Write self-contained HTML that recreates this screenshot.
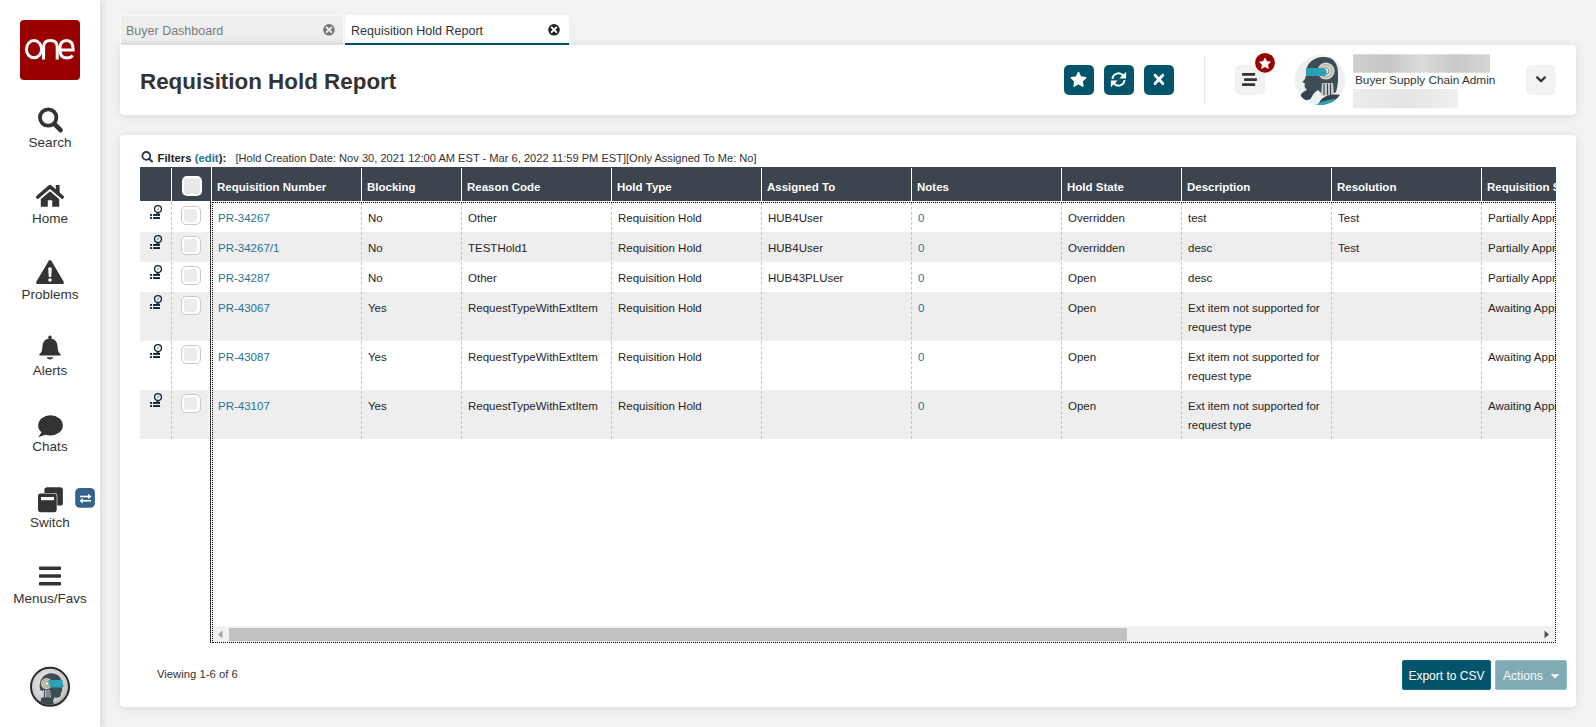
<!DOCTYPE html>
<html><head><meta charset="utf-8">
<style>
*{box-sizing:border-box;margin:0;padding:0}
html,body{width:1596px;height:727px;overflow:hidden;background:#f2f2f2;font-family:"Liberation Sans",sans-serif;color:#333}
.abs{position:absolute}
#side{position:absolute;left:0;top:0;width:100px;height:727px;background:#fff;box-shadow:2px 0 6px rgba(0,0,0,0.10)}
.nav{position:absolute;left:0;width:100px;text-align:center;font-size:13.5px;color:#333;line-height:16px}
.tab{position:absolute;top:15px;height:30px;border-radius:5px 5px 0 0;font-size:12.5px;line-height:32px;padding-left:6px}
.card{position:absolute;left:120px;width:1456px;background:#fff;border-radius:4px;box-shadow:0 1px 8px rgba(0,0,0,0.10)}
.hbtn{position:absolute;top:65px;width:30px;height:30px;border-radius:5px;background:#02546b}
.th{position:absolute;top:167px;height:34px;color:#fff;font-weight:bold;font-size:11.5px;line-height:34px;white-space:nowrap}
.td{position:absolute;font-size:11.5px;line-height:19px;color:#252525}
.lnk{color:#1f7596}
</style></head>
<body>
<div id="side">
<svg width="100" height="727" viewBox="0 0 100 727" style="position:absolute;left:0;top:0">
 <rect x="20" y="20" width="60" height="60" rx="4" fill="#990000"/>
 <g fill="none" stroke="#fff" stroke-width="3">
  <ellipse cx="34" cy="49.2" rx="7.6" ry="8.6"/>
  <path d="M43.6 59.5 V47 Q43.6 40.6 50.4 40.6 Q57.2 40.6 57.2 47 V59.5"/>
  <path d="M59.8 50 H73.2 Q73.2 40.6 66.6 40.6 Q59.8 40.6 59.8 49.3 Q59.8 57.9 66.8 57.9 Q70.6 57.9 72.8 55.6"/>
 </g>
 <g fill="#333" stroke="none">
  <circle cx="48.2" cy="117.5" r="8.2" fill="none" stroke="#333" stroke-width="3.8"/>
  <line x1="54.4" y1="123.8" x2="60.6" y2="130.2" stroke="#333" stroke-width="4.6" stroke-linecap="round"/>
  <!-- home -->
  <path d="M40.8 199 L50 191.3 L59.2 199 V206.8 H52.2 V200.2 H47.8 V206.8 H40.8 Z"/>
  <polyline points="37.8,197 50,186.6 62.2,197" fill="none" stroke="#fff" stroke-width="6.5" stroke-linecap="round" stroke-linejoin="round"/>
  <polyline points="37.8,197 50,186.6 62.2,197" fill="none" stroke="#333" stroke-width="3.6" stroke-linecap="round" stroke-linejoin="round"/>
  <rect x="55.8" y="185" width="3.8" height="7.5"/>
  <!-- problems -->
  <path d="M50 261.5 L37.6 282.5 H62.4 Z" stroke="#333" stroke-width="3" stroke-linejoin="round"/>
  <path d="M48.2 268.5 Q48.2 267.6 49.1 267.6 H50.9 Q51.8 267.6 51.8 268.5 L51.2 277 H48.8 Z" fill="#fff"/>
  <circle cx="50" cy="280" r="1.8" fill="#fff"/>
  <!-- bell -->
  <circle cx="50" cy="337.4" r="1.8"/>
  <path d="M50 338.4 C44.5 338.4 42.6 342.5 42.4 347 C42.2 351 41.5 352.5 39.2 354.6 Q39 355.6 40.2 355.6 H59.8 Q61 355.6 60.8 354.6 C58.5 352.5 57.8 351 57.6 347 C57.4 342.5 55.5 338.4 50 338.4 Z"/>
  <path d="M46.3 357.2 H53.7 Q50 362 46.3 357.2 Z"/>
  <!-- chat -->
  <ellipse cx="50.5" cy="425.4" rx="12.3" ry="10.1"/>
  <path d="M42.5 431 L38.2 437.2 L47.5 434 Z"/>
  <!-- switch -->
  <rect x="44.4" y="487.3" width="18.5" height="18.3" rx="2.6"/>
  <rect x="37.4" y="493" width="19.9" height="19.8" rx="3" fill="#fff"/>
  <rect x="38" y="493.6" width="18.7" height="18.6" rx="2.6"/>
  <rect x="41" y="497" width="13" height="3.2" fill="#fff"/>
  <rect x="75.2" y="488" width="19.7" height="19.8" rx="4.6" fill="#35628a"/>
  <g stroke="#fff" stroke-width="1.6" fill="#fff">
   <line x1="80" y1="496.5" x2="89" y2="496.5"/>
   <line x1="82" y1="500.8" x2="91" y2="500.8"/>
  </g>
  <path d="M88.2 493.8 L91.4 496.5 L88.2 499.2 Z" fill="#fff"/>
  <path d="M82.8 498.1 L79.6 500.8 L82.8 503.5 Z" fill="#fff"/>
  <!-- menu -->
  <rect x="39" y="566.4" width="22" height="3.6" rx="0.8"/>
  <rect x="39" y="574.2" width="22" height="3.6" rx="0.8"/>
  <rect x="39" y="582" width="22" height="3.6" rx="0.8"/>
 </g>
 <!-- avatar -->
 <defs>
  <radialGradient id="avg" cx="0.45" cy="0.4" r="0.7">
   <stop offset="0" stop-color="#f4f4f4"/><stop offset="0.7" stop-color="#c9c9c9"/><stop offset="1" stop-color="#8a8a8a"/>
  </radialGradient>
 </defs>
 <circle cx="50" cy="686.8" r="19" fill="url(#avg)" stroke="#2b2b2b" stroke-width="2"/>
 <clipPath id="avc2"><circle cx="50" cy="686.8" r="18"/></clipPath>
 <g clip-path="url(#avc2)">
 <path d="M40.2 690 C38.6 683 41 675.2 49 673.4 C56 672.2 61 676 62 682 L63.6 686.6 L62 687.6 C62.5 690 62.2 692.4 60.6 693.4 L60.8 695.6 C60 697.6 57 698 54.6 697.6 L52.5 701 L47 693 Z" fill="#3d4c55"/>
 <circle cx="46.6" cy="683.6" r="5.6" fill="#d6d6d6"/>
 <circle cx="46.6" cy="683.6" r="4" fill="none" stroke="#a8925e" stroke-width="0.9"/>
 <circle cx="47" cy="683.6" r="2.1" fill="#ececec" stroke="#707070" stroke-width="0.7"/>
 <path d="M48.6 680 H62.6 V687.4 H50.4 Q48.6 684 48.6 680 Z" fill="#2aa3b7"/>
 <path d="M43 690 H50 L51 698 H43 Z" fill="#bdbdbd"/>
 <path d="M44.5 690 V698 M47 690 V698 M49 690.5 V698" stroke="#3d4c55" stroke-width="0.9"/>
 <path d="M39.5 706 L41.5 697.5 L52 697.5 L54.5 706 Z" fill="#3a4850"/>
 </g>
</svg>
<div class="nav" style="top:134.5px">Search</div>
<div class="nav" style="top:210.5px">Home</div>
<div class="nav" style="top:286.5px">Problems</div>
<div class="nav" style="top:362.5px">Alerts</div>
<div class="nav" style="top:438.5px">Chats</div>
<div class="nav" style="top:514.5px">Switch</div>
<div class="nav" style="top:590.5px">Menus/Favs</div>
</div>

<!-- tabs -->
<div class="tab" style="left:120px;width:224px;background:#eeeeee;color:#7a7a7a;border:1px solid #fafafa;border-bottom:0;padding-left:5px;line-height:31px;box-shadow:inset 0 -6px 8px -6px rgba(0,0,0,0.10)">Buyer Dashboard</div>
<div class="tab" style="left:345px;width:224px;background:#fff;color:#333;border-bottom:2px solid #02546b">Requisition Hold Report</div>

<svg class="abs" style="left:0;top:0" width="600" height="45" viewBox="0 0 600 45">
 <circle cx="329" cy="29.8" r="5.8" fill="#777"/>
 <g stroke="#eee" stroke-width="1.9" stroke-linecap="round"><line x1="326.6" y1="27.4" x2="331.4" y2="32.2"/><line x1="331.4" y1="27.4" x2="326.6" y2="32.2"/></g>
 <circle cx="554" cy="29.8" r="5.8" fill="#222"/>
 <g stroke="#fff" stroke-width="1.9" stroke-linecap="round"><line x1="551.6" y1="27.4" x2="556.4" y2="32.2"/><line x1="556.4" y1="27.4" x2="551.6" y2="32.2"/></g>
</svg>
<!-- header card -->
<div class="card" style="top:45px;height:70px;border-radius:0 4px 4px 4px"></div>

<!-- header content -->
<div class="abs" style="left:140px;top:69px;font-size:22.4px;line-height:26px;font-weight:bold;color:#333">Requisition Hold Report</div>
<div class="hbtn" style="left:1064px"></div>
<div class="hbtn" style="left:1104px"></div>
<div class="hbtn" style="left:1144px"></div>
<svg class="abs" style="left:0;top:0" width="1596" height="120" viewBox="0 0 1596 120">
 <polygon points="1078.50,72.40 1080.67,77.01 1085.73,77.65 1082.02,81.14 1082.97,86.15 1078.50,83.70 1074.03,86.15 1074.98,81.14 1071.27,77.65 1076.33,77.01" fill="#fff" stroke="#fff" stroke-width="1.4" stroke-linejoin="round"/>
 <g fill="none" stroke="#fff" stroke-width="2">
  <path d="M1112.5 79 A6 6 0 0 1 1123.3 75.8"/>
  <path d="M1124.5 80 A6 6 0 0 1 1113.7 83.2"/>
 </g>
 <polygon points="1119.3,78.6 1126.1,78.6 1126.1,71.8" fill="#fff"/>
 <polygon points="1117.7,80.4 1110.9,80.4 1110.9,87.2" fill="#fff"/>
 <g stroke="#fff" stroke-width="2.9" stroke-linecap="round">
  <line x1="1155.1" y1="75.3" x2="1162.8" y2="83.6"/>
  <line x1="1162.8" y1="75.3" x2="1155.1" y2="83.6"/>
 </g>
 <rect x="1204" y="55" width="1" height="50" fill="#e8e8e8"/>
 <rect x="1235" y="65" width="30" height="30" rx="5" fill="#f2f2f2"/>
 <rect x="1242" y="72.9" width="13.2" height="2.9" rx="0.8" fill="#333"/>
 <rect x="1244" y="78.2" width="13" height="2.9" rx="0.8" fill="#333"/>
 <rect x="1242" y="83.2" width="13.2" height="2.9" rx="0.8" fill="#333"/>
 <circle cx="1265" cy="62.8" r="9.9" fill="#990000"/>
 <polygon points="1265.00,58.10 1266.65,61.53 1270.42,62.04 1267.66,64.67 1268.35,68.41 1265.00,66.60 1261.65,68.41 1262.34,64.67 1259.58,62.04 1263.35,61.53" fill="#fff" stroke="#fff" stroke-width="0.8" stroke-linejoin="round"/>
 <rect x="1526" y="65" width="30" height="30" rx="5" fill="#f2f2f2"/>
 <polyline points="1537.2,77.4 1541,81.2 1544.8,77.4" fill="none" stroke="#333" stroke-width="2.3" stroke-linecap="round" stroke-linejoin="round"/>
 <defs>
  <linearGradient id="blur1" x1="0" x2="1" y1="0" y2="0">
   <stop offset="0" stop-color="#cfcfcf"/><stop offset="0.25" stop-color="#c6c6c6"/><stop offset="0.5" stop-color="#dadada"/><stop offset="0.75" stop-color="#c8c8c8"/><stop offset="1" stop-color="#d6d6d6"/>
  </linearGradient>
  <linearGradient id="blur2" x1="0" x2="1" y1="0" y2="0">
   <stop offset="0" stop-color="#ececec"/><stop offset="0.5" stop-color="#e4e4e4"/><stop offset="1" stop-color="#f0f0f0"/>
  </linearGradient>
 </defs>
 <rect x="1353" y="54.3" width="137" height="18.4" fill="url(#blur1)"/>
 <rect x="1353" y="89" width="105" height="19.3" fill="url(#blur2)"/>
 <!-- avatar -->
 <circle cx="1320" cy="80" r="25" fill="#efefef"/>
 <clipPath id="avclip"><circle cx="1320" cy="80" r="25"/></clipPath>
 <g clip-path="url(#avclip)">
  <path d="M1336 92 C1338 86 1338.5 78 1337.8 70 C1337 61 1331 56.5 1323 57 C1314 57.5 1308.5 62 1306.5 68.5 L1306 75 L1305 79 L1302.5 82 L1305 83.5 C1304 86 1304.5 88 1306.5 89 C1305.5 91.5 1306 93 1308.5 93.5 L1314 93 L1318 90 L1322 94 L1330 95 Z" fill="#3d4c55"/>
  <path d="M1300.5 96 C1301.5 92 1305.5 90 1309.5 90.5 L1314.5 92 L1310.5 99 C1306.5 101 1301.5 100 1300.5 96 Z" fill="#34434b"/>
  <circle cx="1326" cy="71" r="8.6" fill="#d4d7d8"/>
  <circle cx="1326" cy="71" r="6.2" fill="none" stroke="#b09a66" stroke-width="1"/>
  <circle cx="1325.5" cy="71" r="3.4" fill="#eeeeee" stroke="#6b6b6b" stroke-width="0.8"/>
  <path d="M1306 68 H1324 Q1329 71.5 1325 76 H1306 Z" fill="#2aa0b4"/>
  <path d="M1322 83 H1333 L1334 96 H1321 Z" fill="#cfcfcf"/>
  <path d="M1324 83.5 V95 M1327.5 83.5 V95 M1330.5 83.5 V95" stroke="#36454d" stroke-width="1.2"/>
  <path d="M1318 106 C1320 98 1326 95 1334 94.5 L1346 95 L1346 106 Z" fill="#34434b"/>
  <path d="M1314 106 C1319 101.5 1330 99.5 1342 97.5 L1346 98.5 L1346 100.5 C1334 102.5 1325 104 1321 106 Z" fill="#2aa3bd"/>
 </g>
</svg>
<div class="abs" style="left:1355px;top:71.9px;font-size:11.8px;line-height:16px;color:#333;white-space:nowrap">Buyer Supply Chain Admin</div>

<!-- main card -->
<div class="card" style="top:135px;height:572px"></div>

<!-- main content -->
<svg class="abs" style="left:140px;top:150.4px" width="14" height="13" viewBox="0 0 14 13"><circle cx="6.3" cy="5.9" r="3.9" fill="none" stroke="#2a3b4c" stroke-width="1.9"/><line x1="9" y1="8.8" x2="12" y2="11.6" stroke="#2a3b4c" stroke-width="2.1" stroke-linecap="round"/></svg>
<div class="abs" style="left:157.5px;top:150px;font-size:11.35px;line-height:16px;white-space:nowrap;color:#222"><b>Filters <span style="color:#1f7596">(edit</span>):</b></div>
<div class="abs" style="left:235.5px;top:150px;font-size:11.1px;line-height:16px;white-space:nowrap;color:#333">[Hold Creation Date: Nov 30, 2021 12:00 AM EST - Mar 6, 2022 11:59 PM EST][Only Assigned To Me: No]</div>
<div class="abs" style="left:140px;top:167px;width:1416px;height:476px;overflow:hidden">
<div class="abs" style="left:0;top:0;width:1416px;height:34px;background:#3c444e"></div>
<div class="abs" style="left:0;top:65px;width:69px;height:30px;background:#eeeeee"></div>
<div class="abs" style="left:72px;top:65px;width:1344px;height:30px;background:#eeeeee"></div>
<div class="abs" style="left:0;top:125px;width:69px;height:49px;background:#eeeeee"></div>
<div class="abs" style="left:72px;top:125px;width:1344px;height:49px;background:#eeeeee"></div>
<div class="abs" style="left:0;top:223px;width:69px;height:49px;background:#eeeeee"></div>
<div class="abs" style="left:72px;top:223px;width:1344px;height:49px;background:#eeeeee"></div>
<div class="abs" style="left:31px;top:1px;width:1px;height:33px;background:#fff"></div>
<div class="abs" style="left:70.5px;top:0;width:1.5px;height:34px;background:#fff"></div>
<div class="abs" style="left:221px;top:1px;width:1px;height:33px;background:#fff"></div>
<div class="abs" style="left:321px;top:1px;width:1px;height:33px;background:#fff"></div>
<div class="abs" style="left:471px;top:1px;width:1px;height:33px;background:#fff"></div>
<div class="abs" style="left:621px;top:1px;width:1px;height:33px;background:#fff"></div>
<div class="abs" style="left:771px;top:1px;width:1px;height:33px;background:#fff"></div>
<div class="abs" style="left:921px;top:1px;width:1px;height:33px;background:#fff"></div>
<div class="abs" style="left:1041px;top:1px;width:1px;height:33px;background:#fff"></div>
<div class="abs" style="left:1191px;top:1px;width:1px;height:33px;background:#fff"></div>
<div class="abs" style="left:1341px;top:1px;width:1px;height:33px;background:#fff"></div>
<div class="abs" style="left:42.3px;top:8.9px;width:19.5px;height:19.8px;border:2.5px solid #fff;border-radius:5px;background:#e8e8e8"></div>
<div class="th" style="left:77px;top:3px">Requisition Number</div>
<div class="th" style="left:227px;top:3px">Blocking</div>
<div class="th" style="left:327px;top:3px">Reason Code</div>
<div class="th" style="left:477px;top:3px">Hold Type</div>
<div class="th" style="left:627px;top:3px">Assigned To</div>
<div class="th" style="left:777px;top:3px">Notes</div>
<div class="th" style="left:927px;top:3px">Hold State</div>
<div class="th" style="left:1047px;top:3px">Description</div>
<div class="th" style="left:1197px;top:3px">Resolution</div>
<div class="th" style="left:1347px;top:3px">Requisition Status</div>
<div class="abs" style="left:31px;top:35px;width:0;height:237px;border-left:1px dashed #c4c4c4"></div>
<div class="abs" style="left:221px;top:35px;width:0;height:237px;border-left:1px dashed #c4c4c4"></div>
<div class="abs" style="left:321px;top:35px;width:0;height:237px;border-left:1px dashed #c4c4c4"></div>
<div class="abs" style="left:471px;top:35px;width:0;height:237px;border-left:1px dashed #c4c4c4"></div>
<div class="abs" style="left:621px;top:35px;width:0;height:237px;border-left:1px dashed #c4c4c4"></div>
<div class="abs" style="left:771px;top:35px;width:0;height:237px;border-left:1px dashed #c4c4c4"></div>
<div class="abs" style="left:921px;top:35px;width:0;height:237px;border-left:1px dashed #c4c4c4"></div>
<div class="abs" style="left:1041px;top:35px;width:0;height:237px;border-left:1px dashed #c4c4c4"></div>
<div class="abs" style="left:1191px;top:35px;width:0;height:237px;border-left:1px dashed #c4c4c4"></div>
<div class="abs" style="left:1341px;top:35px;width:0;height:237px;border-left:1px dashed #c4c4c4"></div>
<div class="abs" style="left:70px;top:34px;width:1px;height:442px;background:#333"></div>
<svg class="abs" style="left:10px;top:35px" width="14" height="18" viewBox="0 0 14 18"><circle cx="8" cy="7.05" r="3.45" fill="none" stroke="#0d2236" stroke-width="1.3"/><line x1="7.4" y1="7.8" x2="8.9" y2="5.8" stroke="#5a6a78" stroke-width="0.9" stroke-linecap="round"/><rect x="6.2" y="10.8" width="3.2" height="1.3" fill="#0d2236" opacity="0.75"/><rect x="0.1" y="12" width="1.9" height="1.9" fill="#0d2236"/><rect x="3.1" y="12" width="6.9" height="1.9" fill="#0d2236"/><rect x="0.1" y="15.1" width="1.9" height="1.9" fill="#0d2236"/><rect x="3.1" y="15.1" width="6.9" height="1.9" fill="#0d2236"/></svg>
<div class="abs" style="left:41.2px;top:38.9px;width:19.4px;height:19.5px;border:1px solid #c9c9c9;border-radius:5px;background:#fff"><div class="abs" style="left:2.3px;top:2.3px;right:2.3px;bottom:2.3px;border-radius:3px;background:#ececec"></div></div>
<div class="td lnk" style="left:78px;top:41.7px;white-space:nowrap">PR-34267</div>
<div class="td" style="left:228px;top:41.7px;white-space:nowrap">No</div>
<div class="td" style="left:328px;top:41.7px;white-space:nowrap">Other</div>
<div class="td" style="left:478px;top:41.7px;white-space:nowrap">Requisition Hold</div>
<div class="td" style="left:628px;top:41.7px;white-space:nowrap">HUB4User</div>
<div class="td lnk" style="left:778px;top:41.7px;white-space:nowrap">0</div>
<div class="td" style="left:928px;top:41.7px;white-space:nowrap">Overridden</div>
<div class="td" style="left:1048px;top:41.7px;white-space:nowrap">test</div>
<div class="td" style="left:1198px;top:41.7px;white-space:nowrap">Test</div>
<div class="td" style="left:1348px;top:41.7px;white-space:nowrap">Partially Approved</div>
<svg class="abs" style="left:10px;top:65px" width="14" height="18" viewBox="0 0 14 18"><circle cx="8" cy="7.05" r="3.45" fill="none" stroke="#0d2236" stroke-width="1.3"/><line x1="7.4" y1="7.8" x2="8.9" y2="5.8" stroke="#5a6a78" stroke-width="0.9" stroke-linecap="round"/><rect x="6.2" y="10.8" width="3.2" height="1.3" fill="#0d2236" opacity="0.75"/><rect x="0.1" y="12" width="1.9" height="1.9" fill="#0d2236"/><rect x="3.1" y="12" width="6.9" height="1.9" fill="#0d2236"/><rect x="0.1" y="15.1" width="1.9" height="1.9" fill="#0d2236"/><rect x="3.1" y="15.1" width="6.9" height="1.9" fill="#0d2236"/></svg>
<div class="abs" style="left:41.2px;top:68.9px;width:19.4px;height:19.5px;border:1px solid #c9c9c9;border-radius:5px;background:#fff"><div class="abs" style="left:2.3px;top:2.3px;right:2.3px;bottom:2.3px;border-radius:3px;background:#ececec"></div></div>
<div class="td lnk" style="left:78px;top:71.7px;white-space:nowrap">PR-34267/1</div>
<div class="td" style="left:228px;top:71.7px;white-space:nowrap">No</div>
<div class="td" style="left:328px;top:71.7px;white-space:nowrap">TESTHold1</div>
<div class="td" style="left:478px;top:71.7px;white-space:nowrap">Requisition Hold</div>
<div class="td" style="left:628px;top:71.7px;white-space:nowrap">HUB4User</div>
<div class="td lnk" style="left:778px;top:71.7px;white-space:nowrap">0</div>
<div class="td" style="left:928px;top:71.7px;white-space:nowrap">Overridden</div>
<div class="td" style="left:1048px;top:71.7px;white-space:nowrap">desc</div>
<div class="td" style="left:1198px;top:71.7px;white-space:nowrap">Test</div>
<div class="td" style="left:1348px;top:71.7px;white-space:nowrap">Partially Approved</div>
<svg class="abs" style="left:10px;top:95px" width="14" height="18" viewBox="0 0 14 18"><circle cx="8" cy="7.05" r="3.45" fill="none" stroke="#0d2236" stroke-width="1.3"/><line x1="7.4" y1="7.8" x2="8.9" y2="5.8" stroke="#5a6a78" stroke-width="0.9" stroke-linecap="round"/><rect x="6.2" y="10.8" width="3.2" height="1.3" fill="#0d2236" opacity="0.75"/><rect x="0.1" y="12" width="1.9" height="1.9" fill="#0d2236"/><rect x="3.1" y="12" width="6.9" height="1.9" fill="#0d2236"/><rect x="0.1" y="15.1" width="1.9" height="1.9" fill="#0d2236"/><rect x="3.1" y="15.1" width="6.9" height="1.9" fill="#0d2236"/></svg>
<div class="abs" style="left:41.2px;top:98.9px;width:19.4px;height:19.5px;border:1px solid #c9c9c9;border-radius:5px;background:#fff"><div class="abs" style="left:2.3px;top:2.3px;right:2.3px;bottom:2.3px;border-radius:3px;background:#ececec"></div></div>
<div class="td lnk" style="left:78px;top:101.7px;white-space:nowrap">PR-34287</div>
<div class="td" style="left:228px;top:101.7px;white-space:nowrap">No</div>
<div class="td" style="left:328px;top:101.7px;white-space:nowrap">Other</div>
<div class="td" style="left:478px;top:101.7px;white-space:nowrap">Requisition Hold</div>
<div class="td" style="left:628px;top:101.7px;white-space:nowrap">HUB43PLUser</div>
<div class="td lnk" style="left:778px;top:101.7px;white-space:nowrap">0</div>
<div class="td" style="left:928px;top:101.7px;white-space:nowrap">Open</div>
<div class="td" style="left:1048px;top:101.7px;white-space:nowrap">desc</div>
<div class="td" style="left:1348px;top:101.7px;white-space:nowrap">Partially Approved</div>
<svg class="abs" style="left:10px;top:125px" width="14" height="18" viewBox="0 0 14 18"><circle cx="8" cy="7.05" r="3.45" fill="none" stroke="#0d2236" stroke-width="1.3"/><line x1="7.4" y1="7.8" x2="8.9" y2="5.8" stroke="#5a6a78" stroke-width="0.9" stroke-linecap="round"/><rect x="6.2" y="10.8" width="3.2" height="1.3" fill="#0d2236" opacity="0.75"/><rect x="0.1" y="12" width="1.9" height="1.9" fill="#0d2236"/><rect x="3.1" y="12" width="6.9" height="1.9" fill="#0d2236"/><rect x="0.1" y="15.1" width="1.9" height="1.9" fill="#0d2236"/><rect x="3.1" y="15.1" width="6.9" height="1.9" fill="#0d2236"/></svg>
<div class="abs" style="left:41.2px;top:128.9px;width:19.4px;height:19.5px;border:1px solid #c9c9c9;border-radius:5px;background:#fff"><div class="abs" style="left:2.3px;top:2.3px;right:2.3px;bottom:2.3px;border-radius:3px;background:#ececec"></div></div>
<div class="td lnk" style="left:78px;top:131.7px;white-space:nowrap">PR-43067</div>
<div class="td" style="left:228px;top:131.7px;white-space:nowrap">Yes</div>
<div class="td" style="left:328px;top:131.7px;white-space:nowrap">RequestTypeWithExtItem</div>
<div class="td" style="left:478px;top:131.7px;white-space:nowrap">Requisition Hold</div>
<div class="td lnk" style="left:778px;top:131.7px;white-space:nowrap">0</div>
<div class="td" style="left:928px;top:131.7px;white-space:nowrap">Open</div>
<div class="td" style="left:1048px;top:131.7px;white-space:nowrap">Ext item not supported for<br>request type</div>
<div class="td" style="left:1348px;top:131.7px;white-space:nowrap">Awaiting Approval</div>
<svg class="abs" style="left:10px;top:174px" width="14" height="18" viewBox="0 0 14 18"><circle cx="8" cy="7.05" r="3.45" fill="none" stroke="#0d2236" stroke-width="1.3"/><line x1="7.4" y1="7.8" x2="8.9" y2="5.8" stroke="#5a6a78" stroke-width="0.9" stroke-linecap="round"/><rect x="6.2" y="10.8" width="3.2" height="1.3" fill="#0d2236" opacity="0.75"/><rect x="0.1" y="12" width="1.9" height="1.9" fill="#0d2236"/><rect x="3.1" y="12" width="6.9" height="1.9" fill="#0d2236"/><rect x="0.1" y="15.1" width="1.9" height="1.9" fill="#0d2236"/><rect x="3.1" y="15.1" width="6.9" height="1.9" fill="#0d2236"/></svg>
<div class="abs" style="left:41.2px;top:177.9px;width:19.4px;height:19.5px;border:1px solid #c9c9c9;border-radius:5px;background:#fff"><div class="abs" style="left:2.3px;top:2.3px;right:2.3px;bottom:2.3px;border-radius:3px;background:#ececec"></div></div>
<div class="td lnk" style="left:78px;top:180.7px;white-space:nowrap">PR-43087</div>
<div class="td" style="left:228px;top:180.7px;white-space:nowrap">Yes</div>
<div class="td" style="left:328px;top:180.7px;white-space:nowrap">RequestTypeWithExtItem</div>
<div class="td" style="left:478px;top:180.7px;white-space:nowrap">Requisition Hold</div>
<div class="td lnk" style="left:778px;top:180.7px;white-space:nowrap">0</div>
<div class="td" style="left:928px;top:180.7px;white-space:nowrap">Open</div>
<div class="td" style="left:1048px;top:180.7px;white-space:nowrap">Ext item not supported for<br>request type</div>
<div class="td" style="left:1348px;top:180.7px;white-space:nowrap">Awaiting Approval</div>
<svg class="abs" style="left:10px;top:223px" width="14" height="18" viewBox="0 0 14 18"><circle cx="8" cy="7.05" r="3.45" fill="none" stroke="#0d2236" stroke-width="1.3"/><line x1="7.4" y1="7.8" x2="8.9" y2="5.8" stroke="#5a6a78" stroke-width="0.9" stroke-linecap="round"/><rect x="6.2" y="10.8" width="3.2" height="1.3" fill="#0d2236" opacity="0.75"/><rect x="0.1" y="12" width="1.9" height="1.9" fill="#0d2236"/><rect x="3.1" y="12" width="6.9" height="1.9" fill="#0d2236"/><rect x="0.1" y="15.1" width="1.9" height="1.9" fill="#0d2236"/><rect x="3.1" y="15.1" width="6.9" height="1.9" fill="#0d2236"/></svg>
<div class="abs" style="left:41.2px;top:226.9px;width:19.4px;height:19.5px;border:1px solid #c9c9c9;border-radius:5px;background:#fff"><div class="abs" style="left:2.3px;top:2.3px;right:2.3px;bottom:2.3px;border-radius:3px;background:#ececec"></div></div>
<div class="td lnk" style="left:78px;top:229.7px;white-space:nowrap">PR-43107</div>
<div class="td" style="left:228px;top:229.7px;white-space:nowrap">Yes</div>
<div class="td" style="left:328px;top:229.7px;white-space:nowrap">RequestTypeWithExtItem</div>
<div class="td" style="left:478px;top:229.7px;white-space:nowrap">Requisition Hold</div>
<div class="td lnk" style="left:778px;top:229.7px;white-space:nowrap">0</div>
<div class="td" style="left:928px;top:229.7px;white-space:nowrap">Open</div>
<div class="td" style="left:1048px;top:229.7px;white-space:nowrap">Ext item not supported for<br>request type</div>
<div class="td" style="left:1348px;top:229.7px;white-space:nowrap">Awaiting Approval</div>
</div>
<div class="abs" style="left:212px;top:202px;width:1344px;height:441px;border:1px dotted #000"></div>
<div class="abs" style="left:213px;top:626px;width:1342px;height:15.5px;background:#f1f1f1"></div>
<div class="abs" style="left:229px;top:628px;width:898px;height:12.6px;background:#c1c1c1"></div>
<svg class="abs" style="left:214px;top:626px" width="1342" height="16" viewBox="0 0 1342 16"><polygon points="8.5,4.5 4,8.4 8.5,12.3" fill="#a3a3a3"/><polygon points="1330.5,4.5 1335,8.4 1330.5,12.3" fill="#505050"/></svg>
<div class="abs" style="left:157px;top:665.5px;font-size:11.3px;line-height:16px;white-space:nowrap;color:#333">Viewing 1-6 of 6</div>
<div class="abs" style="left:1402.3px;top:660.4px;width:88.3px;height:29.2px;background:#03546b;border:1px solid #0b6580;border-radius:2px;color:#fff;font-size:12px;line-height:31px;text-align:center;white-space:nowrap">Export to CSV</div>
<div class="abs" style="left:1495.4px;top:660.4px;width:71.2px;height:29.2px;background:#80abb5;border:1px solid #8dbfca;border-radius:2px;color:#f4f8f9;font-size:12.2px;line-height:31px;white-space:nowrap;padding-left:6.5px">Actions<svg class="abs" style="left:55px;top:12.8px" width="9" height="6" viewBox="0 0 9 6"><polygon points="0.3,0.5 7.7,0.5 4,4.2" fill="#f4f8f9" stroke="#f4f8f9" stroke-width="0.6" stroke-linejoin="round"/></svg></div>
</body></html>
